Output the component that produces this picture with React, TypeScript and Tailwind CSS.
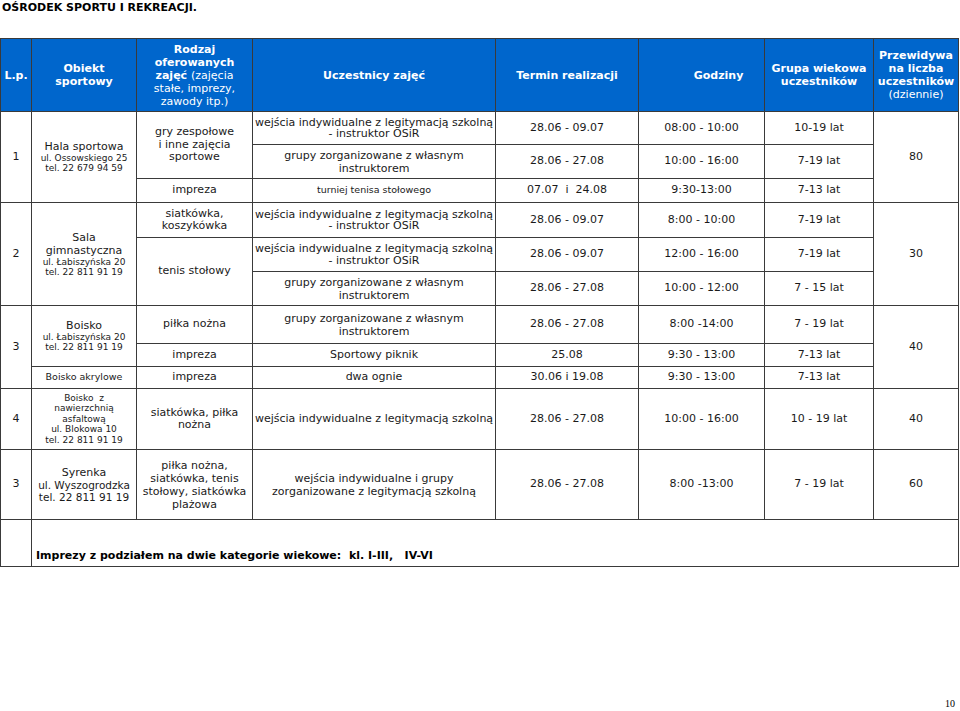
import React from "react";

// Shared cell styles
const base =
  "border border-[#3a3a3a] p-0 text-center align-middle whitespace-nowrap";
const small = "text-[9px] leading-[10.5px]";

type CellProps = {
  children?: React.ReactNode;
  rs?: number;
  cs?: number;
  className?: string;
};

const Td = ({ children, rs, cs, className = "" }: CellProps) => (
  <td rowSpan={rs} colSpan={cs} className={`${base} ${className}`}>
    {children}
  </td>
);

const Th = ({ children, className = "" }: CellProps) => (
  <th
    className={`${base} bg-[#0066cc] text-white font-bold leading-[13px] ${className}`}
  >
    {children}
  </th>
);

const Sport = () => (
  <>
    wejścia indywidualne z legitymacją szkolną
    <br />- instruktor OSiR
  </>
);

const Groups = () => (
  <>
    grupy zorganizowane z własnym
    <br />
    instruktorem
  </>
);

export default function App() {
  return (
    <div className="w-[960px] h-[711px] flex flex-col bg-white text-[#1a1a1a] font-['DejaVu_Sans',sans-serif] text-[11px] leading-[12.5px]">
      <div className="font-bold leading-[13px] pl-[2px] pt-[1px] text-black">
        OŚRODEK SPORTU I REKREACJI.
      </div>

      <table className="mt-[24px] table-fixed border-collapse w-[958px]">
        <colgroup>
          <col className="w-[31px]" />
          <col className="w-[105px]" />
          <col className="w-[116px]" />
          <col className="w-[243px]" />
          <col className="w-[143px]" />
          <col className="w-[126px]" />
          <col className="w-[109px]" />
          <col className="w-[85px]" />
        </colgroup>
        <thead>
          <tr className="h-[73px]">
            <Th>L.p.</Th>
            <Th>
              Obiekt
              <br />
              sportowy
            </Th>
            <Th>
              Rodzaj
              <br />
              oferowanych
              <br />
              zajęć <span className="font-normal">(zajęcia</span>
              <br />
              <span className="font-normal">
                stałe, imprezy,
                <br />
                zawody itp.)
              </span>
            </Th>
            <Th>Uczestnicy zajęć</Th>
            <Th>Termin realizacji</Th>
            <Th className="pl-[34px]">Godziny</Th>
            <Th>
              Grupa wiekowa
              <br />
              uczestników
            </Th>
            <Th>
              Przewidywa
              <br />
              na liczba
              <br />
              uczestników
              <br />
              <span className="font-normal">(dziennie)</span>
            </Th>
          </tr>
        </thead>
        <tbody>
          {/* 1 - Hala sportowa */}
          <tr className="h-[33px]">
            <Td rs={3}>1</Td>
            <Td rs={3}>
              <div className="leading-[12px]">Hala sportowa</div>
              <div className={small}>
                ul. Ossowskiego 25
                <br />
                tel. 22 679 94 59
              </div>
            </Td>
            <Td rs={2}>
              gry zespołowe
              <br />
              i inne zajęcia
              <br />
              sportowe
            </Td>
            <Td className="leading-[11.5px]">
              <Sport />
            </Td>
            <Td>28.06 - 09.07</Td>
            <Td>08:00 - 10:00</Td>
            <Td>10-19 lat</Td>
            <Td rs={3}>80</Td>
          </tr>
          <tr className="h-[34px]">
            <Td className="leading-[13px]">
              <Groups />
            </Td>
            <Td>28.06 - 27.08</Td>
            <Td>10:00 - 16:00</Td>
            <Td>7-19 lat</Td>
          </tr>
          <tr className="h-[24px]">
            <Td>impreza</Td>
            <Td className="text-[9.5px]">turniej tenisa stołowego</Td>
            <Td className="whitespace-pre">07.07  i  24.08</Td>
            <Td>9:30-13:00</Td>
            <Td>7-13 lat</Td>
          </tr>

          {/* 2 - Sala gimnastyczna */}
          <tr className="h-[35px]">
            <Td rs={3}>2</Td>
            <Td rs={3}>
              <div className="leading-[13px]">
                Sala
                <br />
                gimnastyczna
              </div>
              <div className={small}>
                ul. Łabiszyńska 20
                <br />
                tel. 22 811 91 19
              </div>
            </Td>
            <Td>
              siatkówka,
              <br />
              koszykówka
            </Td>
            <Td className="leading-[11.5px]">
              <Sport />
            </Td>
            <Td>28.06 - 09.07</Td>
            <Td>8:00 - 10:00</Td>
            <Td>7-19 lat</Td>
            <Td rs={3}>30</Td>
          </tr>
          <tr className="h-[34px]">
            <Td rs={2}>tenis stołowy</Td>
            <Td className="leading-[11.5px]">
              <Sport />
            </Td>
            <Td>28.06 - 09.07</Td>
            <Td>12:00 - 16:00</Td>
            <Td>7-19 lat</Td>
          </tr>
          <tr className="h-[34px]">
            <Td className="leading-[13px]">
              <Groups />
            </Td>
            <Td>28.06 - 27.08</Td>
            <Td>10:00 - 12:00</Td>
            <Td>7 - 15 lat</Td>
          </tr>

          {/* 3 - Boisko */}
          <tr className="h-[38px]">
            <Td rs={3}>3</Td>
            <Td rs={2}>
              <div className="leading-[12px]">Boisko</div>
              <div className={small}>
                ul. Łabiszyńska 20
                <br />
                tel. 22 811 91 19
              </div>
            </Td>
            <Td>piłka nożna</Td>
            <Td className="leading-[13px]">
              <Groups />
            </Td>
            <Td>28.06 - 27.08</Td>
            <Td>8:00 -14:00</Td>
            <Td>7 - 19 lat</Td>
            <Td rs={3}>40</Td>
          </tr>
          <tr className="h-[23px]">
            <Td>impreza</Td>
            <Td>Sportowy piknik</Td>
            <Td>25.08</Td>
            <Td>9:30 - 13:00</Td>
            <Td>7-13 lat</Td>
          </tr>
          <tr className="h-[22px]">
            <Td className="text-[9.5px]">Boisko akrylowe</Td>
            <Td>impreza</Td>
            <Td>dwa ognie</Td>
            <Td>30.06 i 19.08</Td>
            <Td>9:30 - 13:00</Td>
            <Td>7-13 lat</Td>
          </tr>

          {/* 4 - Boisko asfaltowe */}
          <tr className="h-[61px]">
            <Td>4</Td>
            <Td className={`${small} whitespace-pre`}>
              {"Boisko  z"}
              <br />
              nawierzchnią
              <br />
              asfaltową
              <br />
              ul. Blokowa 10
              <br />
              tel. 22 811 91 19
            </Td>
            <Td>
              siatkówka, piłka
              <br />
              nożna
            </Td>
            <Td>wejścia indywidualne z legitymacją szkolną</Td>
            <Td>28.06 - 27.08</Td>
            <Td>10:00 - 16:00</Td>
            <Td>10 - 19 lat</Td>
            <Td>40</Td>
          </tr>

          {/* Syrenka */}
          <tr className="h-[70px]">
            <Td>3</Td>
            <Td>
              <div className="leading-[12px]">Syrenka</div>
              <div className="text-[10.5px] leading-[12px]">
                ul. Wyszogrodzka
                <br />
                tel. 22 811 91 19
              </div>
            </Td>
            <Td className="leading-[13px]">
              piłka nożna,
              <br />
              siatkówka, tenis
              <br />
              stołowy, siatkówka
              <br />
              plażowa
            </Td>
            <Td className="leading-[13px]">
              wejścia indywidualne i grupy
              <br />
              zorganizowane z legitymacją szkolną
            </Td>
            <Td>28.06 - 27.08</Td>
            <Td>8:00 -13:00</Td>
            <Td>7 - 19 lat</Td>
            <Td>60</Td>
          </tr>

          <tr className="h-[47px]">
            <Td />
            <Td
              cs={7}
              className="!text-left !align-bottom pl-[4px] pb-[4px] font-bold whitespace-pre text-black"
            >
              {"Imprezy z podziałem na dwie kategorie wiekowe:  kl. I-III,   IV-VI"}
            </Td>
          </tr>
        </tbody>
      </table>

      <div className="flex-1" />
      <div className="text-right pr-[5px] pb-[2px] text-[10px] leading-[10px] font-['Liberation_Serif',serif] text-black">
        10
      </div>
    </div>
  );
}
